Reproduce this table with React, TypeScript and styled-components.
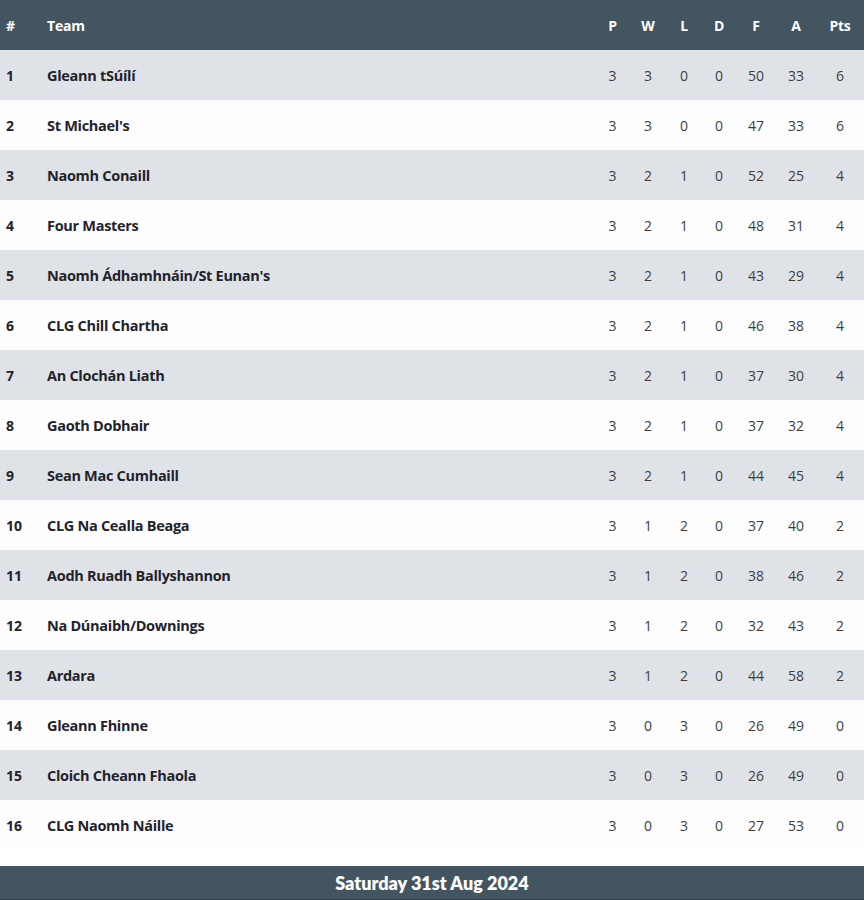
import React, { FC } from "react";
import styled, { createGlobalStyle } from "styled-components";

const GlobalStyle = createGlobalStyle`
    body {
        margin: 0;
        background: #ffffff;
        font-family: "Open Sans", "Noto Sans", sans-serif;
    }
`;

const Wrapper = styled.div`
    width: 864px;
`;

const COLS = "47px 1fr 35px 36px 36px 34px 40px 40px 48px";

const Row = styled.div<{ $striped?: boolean }>`
    display: grid;
    grid-template-columns: ${COLS};
    align-items: center;
    height: 50px;
    background: ${(p) => (p.$striped ? "#dfe2e6" : "#fdfdfe")};
`;

const HeaderRow = styled(Row)`
    background: #435561;
    color: #ffffff;
`;

const HeadCell = styled.div<{ $left?: boolean }>`
    font-size: 14px;
    font-weight: 700;
    text-align: ${(p) => (p.$left ? "left" : "center")};
    letter-spacing: -0.2px;
`;

const PosHead = styled(HeadCell)`
    padding-left: 6px;
`;

const PosCell = styled.div`
    padding-left: 6px;
    font-size: 14px;
    font-weight: 700;
    color: #1f232b;
`;

const TeamCell = styled.div`
    font-size: 14.5px;
    font-weight: 700;
    color: #1f232b;
    letter-spacing: -0.3px;
`;

const StatCell = styled.div`
    text-align: center;
    font-size: 14px;
    color: #3b3f45;
`;

const Footer = styled.div`
    margin-top: 16px;
    height: 33px;
    background: #435561;
    border-bottom: 1px solid #2e3b44;
    color: #ffffff;
    display: flex;
    align-items: center;
    justify-content: center;
    font-family: "Lato", "Open Sans", sans-serif;
    font-weight: 800;
    font-size: 18px;
`;

type Team = [string, number, number, number, number, number, number, number];

const teams: Team[] = [
    ["Gleann tSúílí", 3, 3, 0, 0, 50, 33, 6],
    ["St Michael's", 3, 3, 0, 0, 47, 33, 6],
    ["Naomh Conaill", 3, 2, 1, 0, 52, 25, 4],
    ["Four Masters", 3, 2, 1, 0, 48, 31, 4],
    ["Naomh Ádhamhnáin/St Eunan's", 3, 2, 1, 0, 43, 29, 4],
    ["CLG Chill Chartha", 3, 2, 1, 0, 46, 38, 4],
    ["An Clochán Liath", 3, 2, 1, 0, 37, 30, 4],
    ["Gaoth Dobhair", 3, 2, 1, 0, 37, 32, 4],
    ["Sean Mac Cumhaill", 3, 2, 1, 0, 44, 45, 4],
    ["CLG Na Cealla Beaga", 3, 1, 2, 0, 37, 40, 2],
    ["Aodh Ruadh Ballyshannon", 3, 1, 2, 0, 38, 46, 2],
    ["Na Dúnaibh/Downings", 3, 1, 2, 0, 32, 43, 2],
    ["Ardara", 3, 1, 2, 0, 44, 58, 2],
    ["Gleann Fhinne", 3, 0, 3, 0, 26, 49, 0],
    ["Cloich Cheann Fhaola", 3, 0, 3, 0, 26, 49, 0],
    ["CLG Naomh Náille", 3, 0, 3, 0, 27, 53, 0],
];

const heads = ["P", "W", "L", "D", "F", "A", "Pts"];

const App: FC = () => {
    return (
        <Wrapper>
            <GlobalStyle />
            <HeaderRow>
                <PosHead $left>#</PosHead>
                <HeadCell $left>Team</HeadCell>
                {heads.map((h) => (
                    <HeadCell key={h}>{h}</HeadCell>
                ))}
            </HeaderRow>
            {teams.map(([name, ...stats], i) => (
                <Row key={name} $striped={i % 2 === 0}>
                    <PosCell>{i + 1}</PosCell>
                    <TeamCell>{name}</TeamCell>
                    {stats.map((s, j) => (
                        <StatCell key={j}>{s}</StatCell>
                    ))}
                </Row>
            ))}
            <Footer>Saturday 31st Aug 2024</Footer>
        </Wrapper>
    );
};

export default App;
